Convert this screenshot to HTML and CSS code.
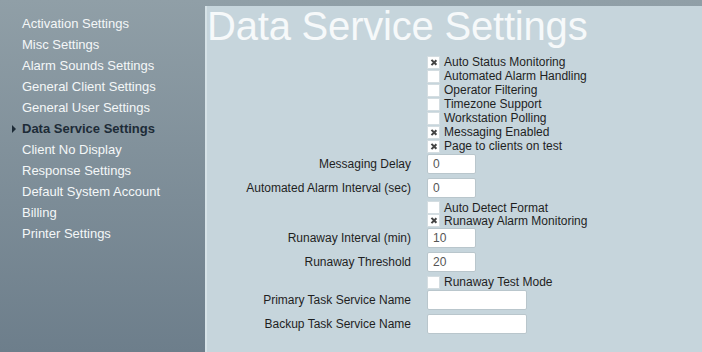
FILE: index.html
```html
<!DOCTYPE html>
<html lang="en">
  <head>
    <meta charset="UTF-8" />
    <title>Data Service Settings</title>
    <link rel="stylesheet" href="styles.css">
  </head>
  <body>
    <nav class="sidebar">
      <a class="nav-item" href="#">Activation Settings</a>
      <a class="nav-item" href="#">Misc Settings</a>
      <a class="nav-item" href="#">Alarm Sounds Settings</a>
      <a class="nav-item" href="#">General Client Settings</a>
      <a class="nav-item" href="#">General User Settings</a>
      <a class="nav-item active" href="#">Data Service Settings</a>
      <a class="nav-item" href="#">Client No Display</a>
      <a class="nav-item" href="#">Response Settings</a>
      <a class="nav-item" href="#">Default System Account</a>
      <a class="nav-item" href="#">Billing</a>
      <a class="nav-item" href="#">Printer Settings</a>
    </nav>

    <main class="panel">
      <h1 class="title">Data Service Settings</h1>

      <div class="form">
        <span></span><label class="check-row"><span class="box checked"></span>Auto Status Monitoring</label>
        <span></span><label class="check-row"><span class="box"></span>Automated Alarm Handling</label>
        <span></span><label class="check-row"><span class="box"></span>Operator Filtering</label>
        <span></span><label class="check-row"><span class="box"></span>Timezone Support</label>
        <span></span><label class="check-row"><span class="box"></span>Workstation Polling</label>
        <span></span><label class="check-row"><span class="box checked"></span>Messaging Enabled</label>
        <span></span><label class="check-row"><span class="box checked"></span>Page to clients on test</label>

        <label class="field-label">Messaging Delay</label>
        <div class="field"><input class="input small" type="text" value="0"></div>
        <label class="field-label">Automated Alarm Interval (sec)</label>
        <div class="field"><input class="input small" type="text" value="0"></div>

        <span class="tight"></span><label class="check-row tight"><span class="box"></span>Auto Detect Format</label>
        <span class="tight"></span><label class="check-row tight"><span class="box checked"></span>Runaway Alarm Monitoring</label>

        <label class="field-label">Runaway Interval (min)</label>
        <div class="field"><input class="input small" type="text" value="10"></div>
        <label class="field-label">Runaway Threshold</label>
        <div class="field"><input class="input small" type="text" value="20"></div>

        <span></span><label class="check-row"><span class="box"></span>Runaway Test Mode</label>

        <label class="field-label">Primary Task Service Name</label>
        <div class="field"><input class="input wide" type="text" value=""></div>
        <label class="field-label">Backup Task Service Name</label>
        <div class="field"><input class="input wide" type="text" value=""></div>
      </div>
    </main>
  </body>
</html>
```

FILE: styles.css
```css
* {
  margin: 0;
  padding: 0;
  box-sizing: border-box;
}

html, body {
  height: 100%;
}

body {
  display: flex;
  background: linear-gradient(to bottom, #909fa7, #6d7e8b);
  font-family: "Liberation Sans", Arial, sans-serif;
  overflow: hidden;
}

.sidebar {
  width: 205px;
  flex-shrink: 0;
  display: flex;
  flex-direction: column;
  padding-top: 13px;
}

.nav-item {
  position: relative;
  display: block;
  padding-left: 22px;
  height: 21px;
  line-height: 21px;
  font-size: 13px;
  color: #f4f7f8;
  text-decoration: none;
}

.nav-item.active {
  font-weight: bold;
  color: #1d2b37;
}

.nav-item.active::before {
  content: "";
  position: absolute;
  left: 12px;
  top: 7px;
  border-left: 4px solid #1d2b37;
  border-top: 4px solid transparent;
  border-bottom: 4px solid transparent;
}

.panel {
  flex: 1;
  margin-top: 6px;
  background: #c6d5dc;
  border-left: 2px solid #d6e2e7;
}

.title {
  font-size: 40px;
  font-weight: normal;
  line-height: 40px;
  color: #f6f9fa;
  letter-spacing: -0.2px;
}

.form {
  display: grid;
  grid-template-columns: 204px 1fr;
  column-gap: 16px;
  margin-top: 9px;
  font-size: 12px;
  color: #1f1f1f;
}

.check-row {
  display: flex;
  align-items: center;
  height: 14px;
  line-height: 14px;
}

.tight {
  height: 13px;
}

.box {
  width: 13px;
  height: 13px;
  margin-right: 4px;
  background: #fff;
  border: 1px solid #d4dde1;
  position: relative;
}

.box.checked::before,
.box.checked::after {
  content: "";
  position: absolute;
  left: 5px;
  top: 2px;
  width: 1.6px;
  height: 7px;
  background: #444;
}

.box.checked::before {
  transform: rotate(45deg);
}

.box.checked::after {
  transform: rotate(-45deg);
}

.field-label {
  height: 24px;
  line-height: 22px;
  text-align: right;
}

.field {
  height: 24px;
  padding-top: 1px;
}

.input {
  height: 20px;
  padding: 0 5px;
  background: #fff;
  border: 1px solid #b9c6cc;
  border-radius: 2px;
  font-family: "Liberation Sans", Arial, sans-serif;
  font-size: 12px;
  color: #555;
}

.input.small {
  width: 49px;
}

.input.wide {
  width: 100px;
}
```
